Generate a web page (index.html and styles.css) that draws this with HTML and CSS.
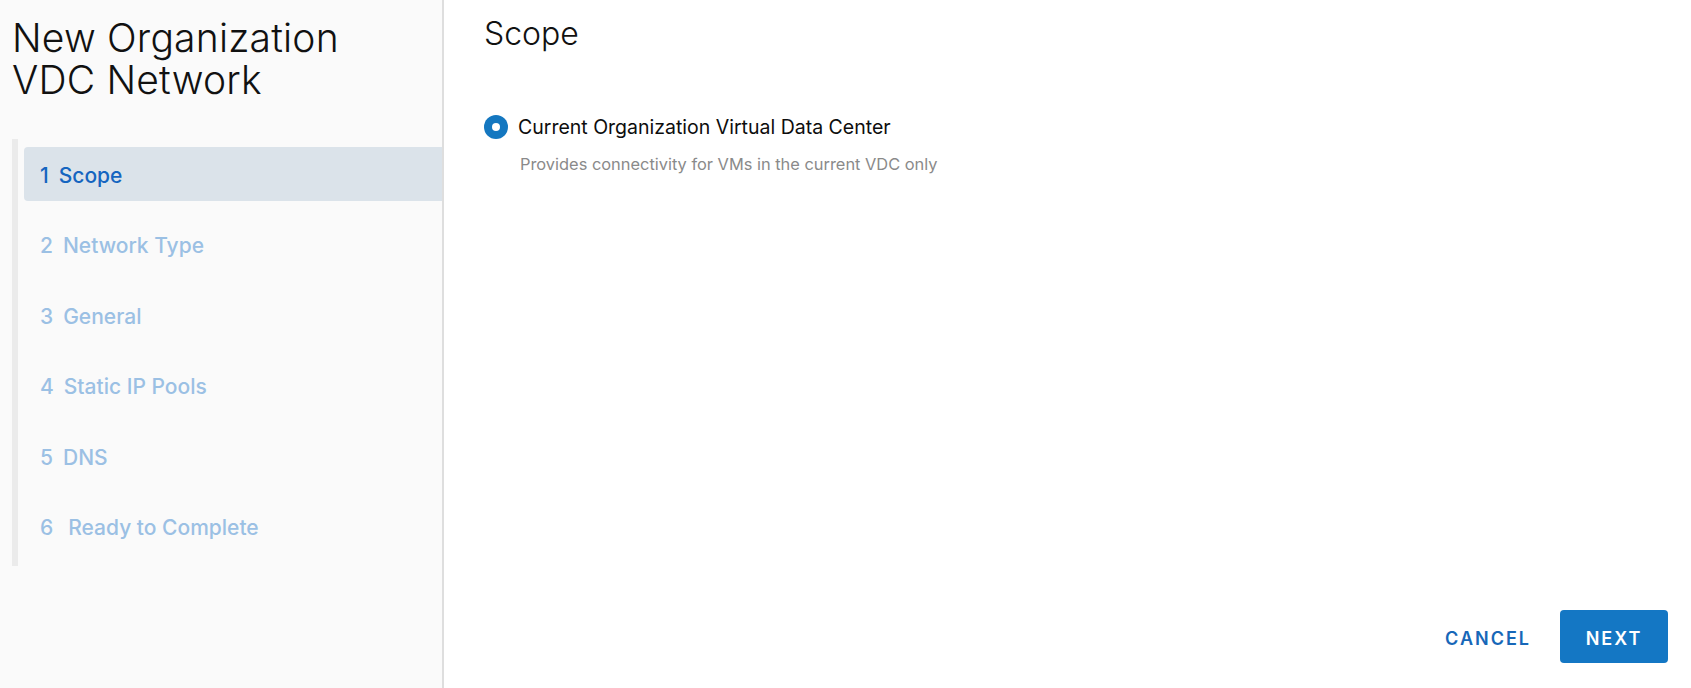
FILE: index.html
```html
<!DOCTYPE html>
<html>
<head>
<meta charset="utf-8">
<link rel="stylesheet" href="styles.css">
</head>
<body>
<div class="wizard">
  <aside class="sidebar">
    <h1 class="title"><span class="title-line">New Organization</span><span class="title-line">VDC Network</span></h1>
    <ul class="steps">
      <li class="step active"><span class="num">1</span><span>Scope</span></li>
      <li class="step"><span class="num">2</span><span>Network Type</span></li>
      <li class="step"><span class="num">3</span><span>General</span></li>
      <li class="step"><span class="num">4</span><span>Static IP Pools</span></li>
      <li class="step"><span class="num">5</span><span>DNS</span></li>
      <li class="step"><span class="num">6</span><span class="wide">Ready to Complete</span></li>
    </ul>
  </aside>
  <main class="content">
    <h2 class="heading">Scope</h2>
    <div class="option">
      <div class="radio-row">
        <span class="radio"></span>
        <span class="label">Current Organization Virtual Data Center</span>
      </div>
      <div class="help">Provides connectivity for VMs in the current VDC only</div>
    </div>
    <div class="footer">
      <button class="btn btn-link">CANCEL</button>
      <button class="btn btn-primary">NEXT</button>
    </div>
  </main>
</div>
</body>
</html>
```
FILE: styles.css
```css
html, body {
  margin: 0;
  padding: 0;
  height: 100%;
  background: #ffffff;
  font-family: Inter, "Noto Sans", sans-serif;
}

.wizard {
  display: flex;
  height: 688px;
}

.sidebar {
  width: 430px;
  flex: none;
  background: #fafafa;
  border-right: 2px solid #dedede;
  padding: 17px 0 0 12px;
}

.title {
  margin: 0;
  font-size: 39px;
  font-weight: 300;
  line-height: 42px;
  color: #111;
  letter-spacing: 0.2px;
}

.title-line {
  display: block;
  height: 42px;
}

.steps {
  list-style: none;
  margin: 38px 0 0 0;
  padding: 8px 0 12px 6px;
  border-left: 6px solid #ebebeb;
  display: flex;
  flex-direction: column;
  gap: 16.6px;
}

.step {
  height: 54px;
  display: flex;
  align-items: center;
  padding-left: 16px;
  padding-top: 2px;
  box-sizing: border-box;
  font-size: 21px;
  font-weight: 500;
  color: #9bc0e4;
  border-radius: 4px 0 0 4px;
}

.step .num {
  margin-right: 10px;
}

.step .wide {
  margin-left: 5px;
}

.step.active {
  background: #dbe3ea;
  color: #1565c0;
}

.content {
  flex: 1;
  display: flex;
  flex-direction: column;
  padding: 14px 23px 25px 40px;
}

.heading {
  margin: 0;
  font-size: 32px;
  font-weight: 300;
  line-height: 40px;
  color: #111;
}

.option {
  margin-top: 61px;
}

.radio-row {
  display: flex;
  align-items: center;
  height: 24px;
}

.radio {
  width: 24px;
  height: 24px;
  border-radius: 50%;
  background: #1477c0;
  position: relative;
  flex: none;
}

.radio::after {
  content: "";
  position: absolute;
  left: 8px;
  top: 8px;
  width: 8px;
  height: 8px;
  border-radius: 50%;
  background: #fff;
}

.label {
  margin-left: 10px;
  font-size: 19.5px;
  color: #0d0d0d;
}

.help {
  margin: 15px 0 0 36px;
  font-size: 16.4px;
  color: #8a8a8a;
}

.footer {
  margin-top: auto;
  display: flex;
  justify-content: flex-end;
  gap: 2px;
}

.btn {
  height: 53px;
  padding: 4px 27px 0;
  border: none;
  border-radius: 4px;
  font-family: Inter, "Noto Sans", sans-serif;
  font-size: 18px;
  font-weight: 600;
  letter-spacing: 2px;
  cursor: pointer;
}

.btn-link {
  background: transparent;
  color: #1767b8;
}

.btn-primary {
  background: #1477c4;
  color: #fff;
  width: 108px;
  padding: 4px 0 0;
}
```
